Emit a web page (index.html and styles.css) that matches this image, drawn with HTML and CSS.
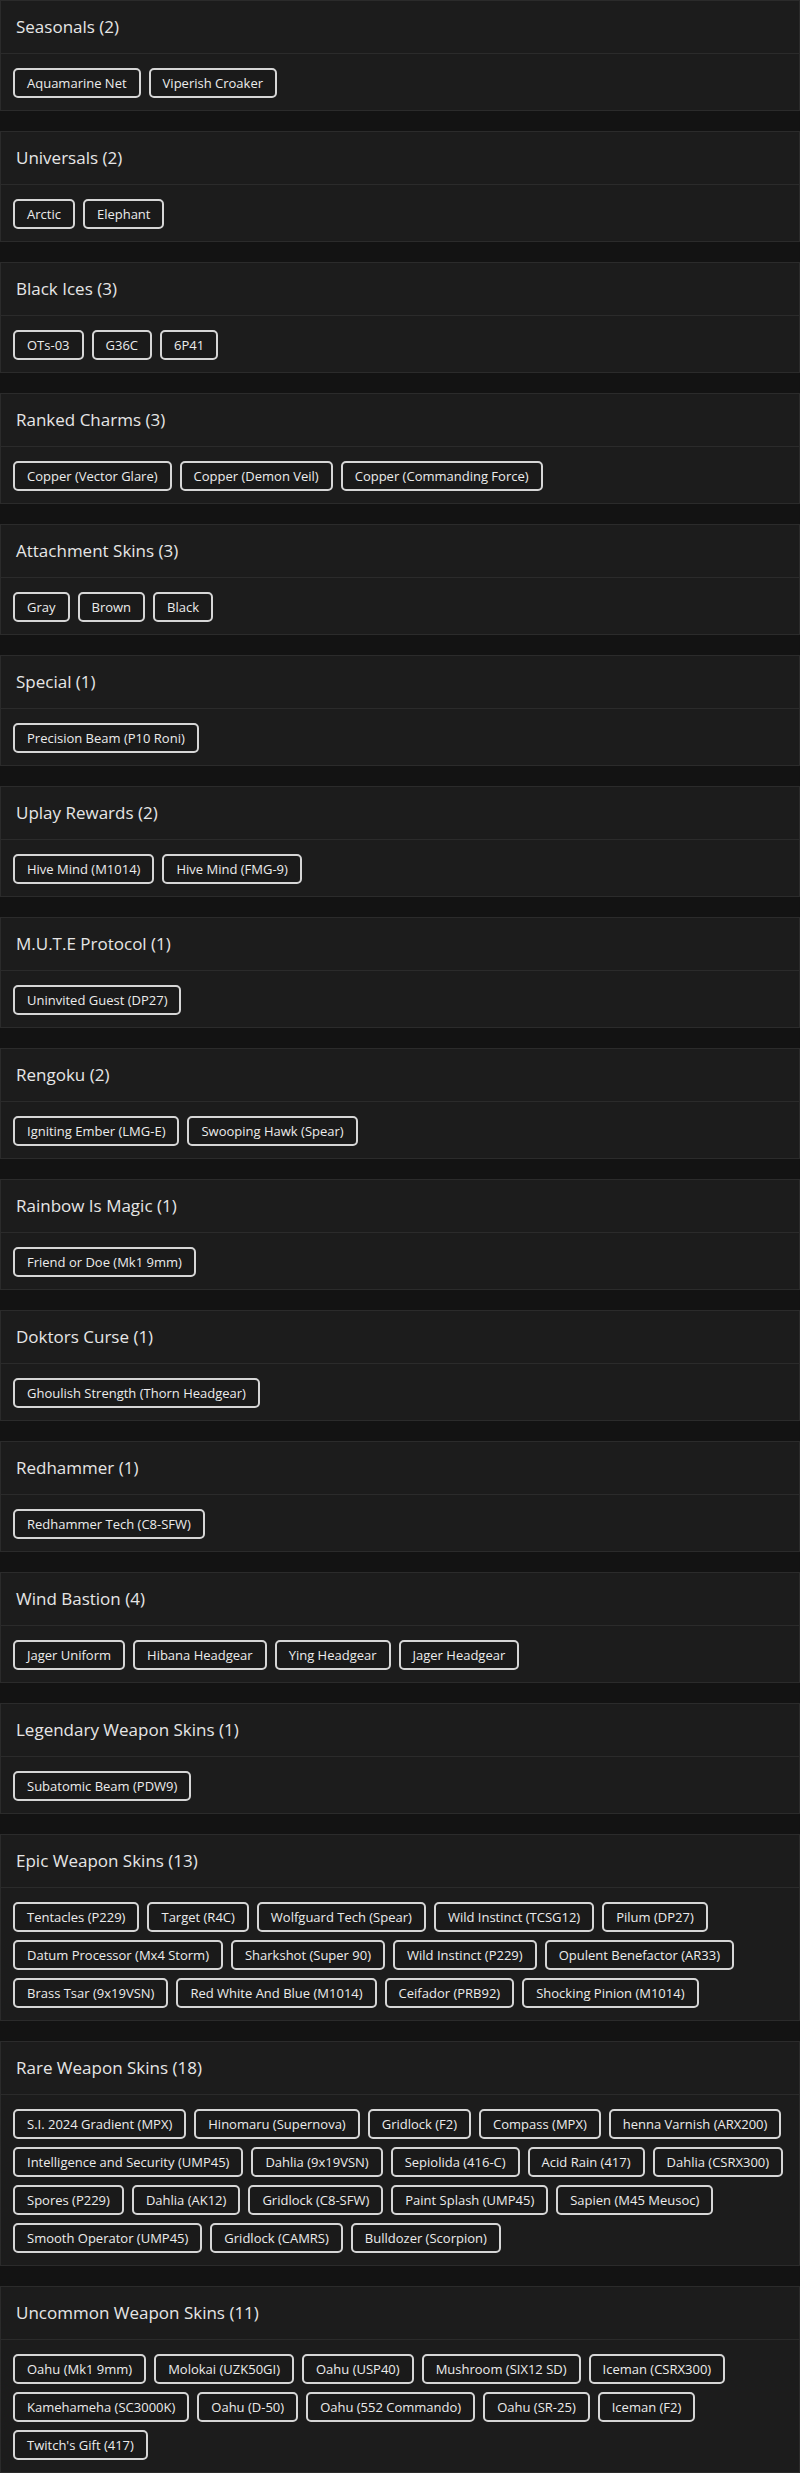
FILE: index.html
```html
<!DOCTYPE html>
<html lang="en">
<head>
<meta charset="utf-8">
<title>Inventory</title>
<link rel="stylesheet" href="styles.css">
</head>
<body>
<main class="list">
  <section class="card">
    <header class="card-header"><h2 class="card-title">Seasonals (2)</h2></header>
    <div class="card-body">
      <span class="tag">Aquamarine Net</span>
      <span class="tag">Viperish Croaker</span>
    </div>
  </section>
  <section class="card">
    <header class="card-header"><h2 class="card-title">Universals (2)</h2></header>
    <div class="card-body">
      <span class="tag">Arctic</span>
      <span class="tag">Elephant</span>
    </div>
  </section>
  <section class="card">
    <header class="card-header"><h2 class="card-title">Black Ices (3)</h2></header>
    <div class="card-body">
      <span class="tag">OTs-03</span>
      <span class="tag">G36C</span>
      <span class="tag">6P41</span>
    </div>
  </section>
  <section class="card">
    <header class="card-header"><h2 class="card-title">Ranked Charms (3)</h2></header>
    <div class="card-body">
      <span class="tag">Copper (Vector Glare)</span>
      <span class="tag">Copper (Demon Veil)</span>
      <span class="tag">Copper (Commanding Force)</span>
    </div>
  </section>
  <section class="card">
    <header class="card-header"><h2 class="card-title">Attachment Skins (3)</h2></header>
    <div class="card-body">
      <span class="tag">Gray</span>
      <span class="tag">Brown</span>
      <span class="tag">Black</span>
    </div>
  </section>
  <section class="card">
    <header class="card-header"><h2 class="card-title">Special (1)</h2></header>
    <div class="card-body">
      <span class="tag">Precision Beam (P10 Roni)</span>
    </div>
  </section>
  <section class="card">
    <header class="card-header"><h2 class="card-title">Uplay Rewards (2)</h2></header>
    <div class="card-body">
      <span class="tag">Hive Mind (M1014)</span>
      <span class="tag">Hive Mind (FMG-9)</span>
    </div>
  </section>
  <section class="card">
    <header class="card-header"><h2 class="card-title">M.U.T.E Protocol (1)</h2></header>
    <div class="card-body">
      <span class="tag">Uninvited Guest (DP27)</span>
    </div>
  </section>
  <section class="card">
    <header class="card-header"><h2 class="card-title">Rengoku (2)</h2></header>
    <div class="card-body">
      <span class="tag">Igniting Ember (LMG-E)</span>
      <span class="tag">Swooping Hawk (Spear)</span>
    </div>
  </section>
  <section class="card">
    <header class="card-header"><h2 class="card-title">Rainbow Is Magic (1)</h2></header>
    <div class="card-body">
      <span class="tag">Friend or Doe (Mk1 9mm)</span>
    </div>
  </section>
  <section class="card">
    <header class="card-header"><h2 class="card-title">Doktors Curse (1)</h2></header>
    <div class="card-body">
      <span class="tag">Ghoulish Strength (Thorn Headgear)</span>
    </div>
  </section>
  <section class="card">
    <header class="card-header"><h2 class="card-title">Redhammer (1)</h2></header>
    <div class="card-body">
      <span class="tag">Redhammer Tech (C8-SFW)</span>
    </div>
  </section>
  <section class="card">
    <header class="card-header"><h2 class="card-title">Wind Bastion (4)</h2></header>
    <div class="card-body">
      <span class="tag">Jager Uniform</span>
      <span class="tag">Hibana Headgear</span>
      <span class="tag">Ying Headgear</span>
      <span class="tag">Jager Headgear</span>
    </div>
  </section>
  <section class="card">
    <header class="card-header"><h2 class="card-title">Legendary Weapon Skins (1)</h2></header>
    <div class="card-body">
      <span class="tag">Subatomic Beam (PDW9)</span>
    </div>
  </section>
  <section class="card">
    <header class="card-header"><h2 class="card-title">Epic Weapon Skins (13)</h2></header>
    <div class="card-body">
      <span class="tag">Tentacles (P229)</span>
      <span class="tag">Target (R4C)</span>
      <span class="tag">Wolfguard Tech (Spear)</span>
      <span class="tag">Wild Instinct (TCSG12)</span>
      <span class="tag">Pilum (DP27)</span>
      <span class="tag">Datum Processor (Mx4 Storm)</span>
      <span class="tag">Sharkshot (Super 90)</span>
      <span class="tag">Wild Instinct (P229)</span>
      <span class="tag">Opulent Benefactor (AR33)</span>
      <span class="tag">Brass Tsar (9x19VSN)</span>
      <span class="tag">Red White And Blue (M1014)</span>
      <span class="tag">Ceifador (PRB92)</span>
      <span class="tag">Shocking Pinion (M1014)</span>
    </div>
  </section>
  <section class="card">
    <header class="card-header"><h2 class="card-title">Rare Weapon Skins (18)</h2></header>
    <div class="card-body">
      <span class="tag">S.I. 2024 Gradient (MPX)</span>
      <span class="tag">Hinomaru (Supernova)</span>
      <span class="tag">Gridlock (F2)</span>
      <span class="tag">Compass (MPX)</span>
      <span class="tag">henna Varnish (ARX200)</span>
      <span class="tag">Intelligence and Security (UMP45)</span>
      <span class="tag">Dahlia (9x19VSN)</span>
      <span class="tag">Sepiolida (416-C)</span>
      <span class="tag">Acid Rain (417)</span>
      <span class="tag">Dahlia (CSRX300)</span>
      <span class="tag">Spores (P229)</span>
      <span class="tag">Dahlia (AK12)</span>
      <span class="tag">Gridlock (C8-SFW)</span>
      <span class="tag">Paint Splash (UMP45)</span>
      <span class="tag">Sapien (M45 Meusoc)</span>
      <span class="tag">Smooth Operator (UMP45)</span>
      <span class="tag">Gridlock (CAMRS)</span>
      <span class="tag">Bulldozer (Scorpion)</span>
    </div>
  </section>
  <section class="card">
    <header class="card-header"><h2 class="card-title">Uncommon Weapon Skins (11)</h2></header>
    <div class="card-body">
      <span class="tag">Oahu (Mk1 9mm)</span>
      <span class="tag">Molokai (UZK50GI)</span>
      <span class="tag">Oahu (USP40)</span>
      <span class="tag">Mushroom (SIX12 SD)</span>
      <span class="tag">Iceman (CSRX300)</span>
      <span class="tag">Kamehameha (SC3000K)</span>
      <span class="tag">Oahu (D-50)</span>
      <span class="tag">Oahu (552 Commando)</span>
      <span class="tag">Oahu (SR-25)</span>
      <span class="tag">Iceman (F2)</span>
      <span class="tag">Twitch's Gift (417)</span>
    </div>
  </section>
</main>
</body>
</html>
```

FILE: styles.css
```css
html, body {
  margin: 0;
  padding: 0;
  background: #131313;
}

body {
  font-family: "Open Sans", "Liberation Sans", sans-serif;
  color: #e6e6e6;
}

.list {
  display: flex;
  flex-direction: column;
  gap: 20px;
}

.card {
  background: #1c1c1c;
  border: 1px solid #2b2b2b;
}

.card-header {
  height: 53px;
  box-sizing: border-box;
  display: flex;
  align-items: center;
  padding: 0 15px;
  border-bottom: 1px solid #2b2b2b;
}

.card-title {
  margin: 0;
  font-size: 17px;
  font-weight: 500;
  line-height: 20px;
  color: #e6e6e6;
}

.card-body {
  display: flex;
  flex-wrap: wrap;
  gap: 8px;
  padding: 14px 6px 12px 12px;
}

.tag {
  box-sizing: border-box;
  height: 30px;
  padding: 0 12px;
  border: 2px solid #d6d6d6;
  border-radius: 5px;
  background: #1a1a1a;
  font-size: 13px;
  line-height: 26px;
  color: #ececec;
  white-space: nowrap;
}
```
